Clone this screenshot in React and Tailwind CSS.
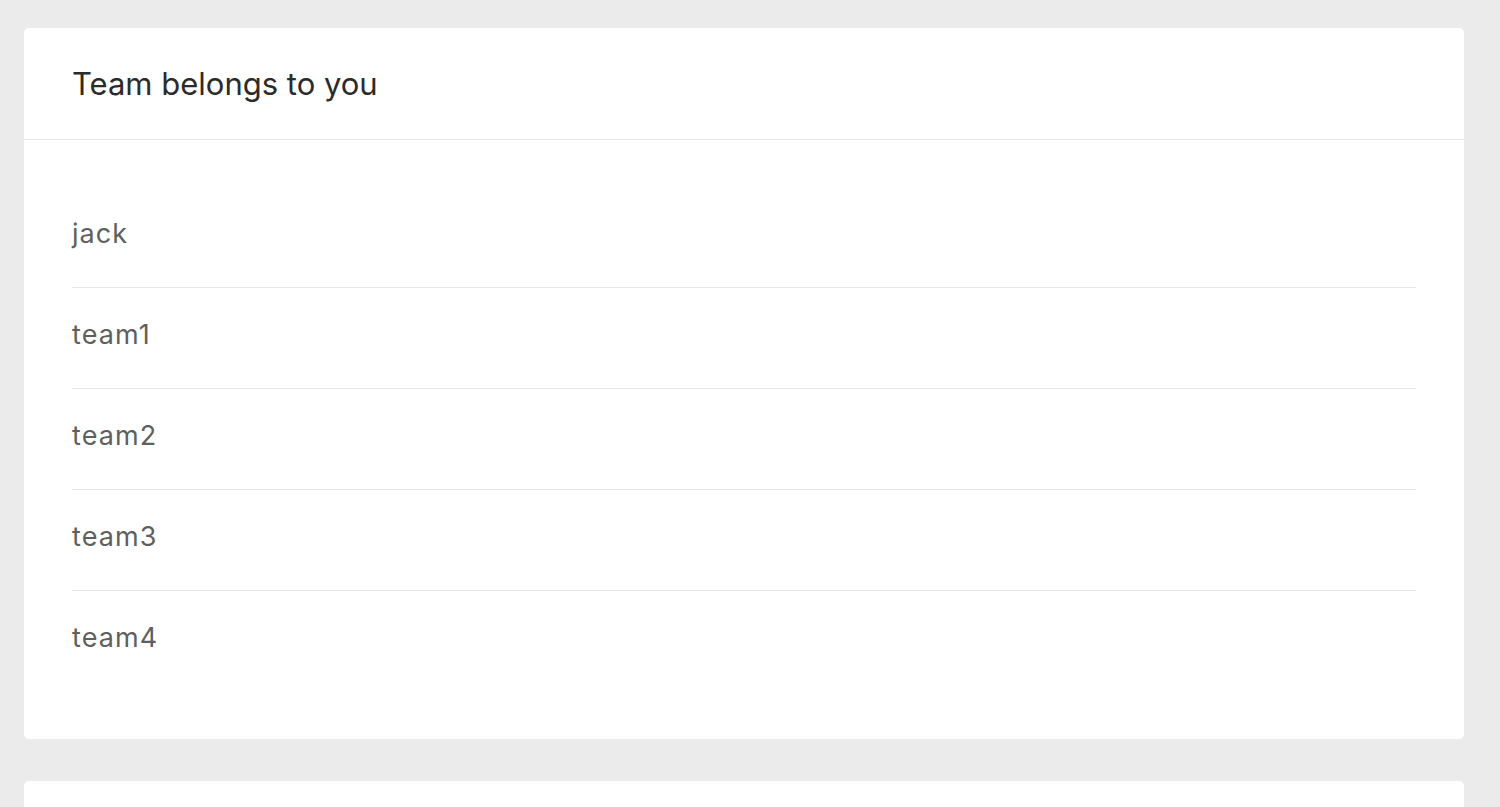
export default function App() {
  const teams = ["jack", "team1", "team2", "team3", "team4"];

  return (
    <div
      className="min-h-screen bg-[#ebebeb] pl-6 pr-9 pt-7 pb-10"
      style={{ fontFamily: "Inter, 'Liberation Sans', sans-serif" }}
    >
      {/* TEAM CARD */}
      <div className="bg-white rounded-[5px]">
        <div className="h-[112px] px-12 flex items-center border-b border-[#e6e6e6]">
          <h2 className="text-[31px] text-[#2b2b2b] leading-none">Team belongs to you</h2>
        </div>
        <ul className="px-12 py-[47px]">
          {teams.map((t, i) => (
            <li
              key={t}
              className={`h-[101px] flex items-center pb-[6px] text-[27px] tracking-[0.04em] text-[#5f5f5f] ${
                i < teams.length - 1 ? "border-b border-[#e6e6e6]" : ""
              }`}
            >
              {t}
            </li>
          ))}
        </ul>
      </div>

      {/* NEXT CARD */}
      <div className="bg-white rounded-[5px] mt-[42px] h-[200px]" />
    </div>
  );
}
